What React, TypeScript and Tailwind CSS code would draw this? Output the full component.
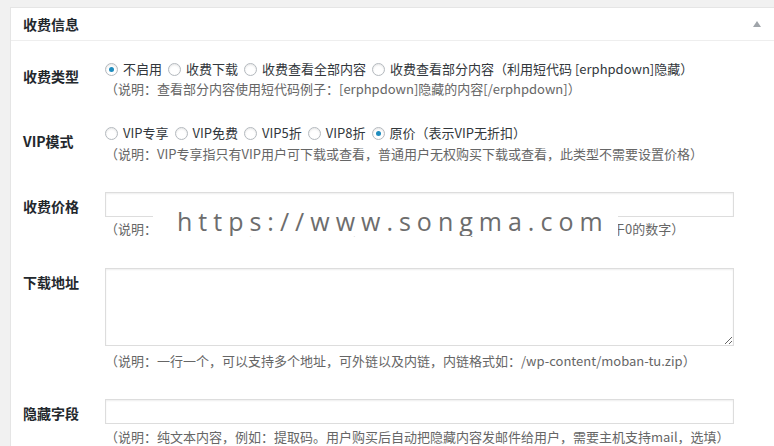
import React from "react";

const cjk = "font-['Microsoft_YaHei','Noto_Sans_CJK_SC',sans-serif]";

function Radio({ checked, label }: { checked?: boolean; label: string }) {
  return (
    <label className="flex items-center mr-[6px] whitespace-nowrap">
      <span className="w-[13px] h-[13px] mr-[5px] rounded-full border border-[#b4b9be] bg-white shadow-[inset_0_1px_2px_rgba(0,0,0,0.1)] flex items-center justify-center shrink-0">
        {checked && <span className="w-[5px] h-[5px] rounded-full bg-[#1e8cbe]" />}
      </span>
      <span>{label}</span>
    </label>
  );
}

function Row({
  label,
  labelPad,
  className,
  children,
}: {
  label: string;
  labelPad: string;
  className: string;
  children: React.ReactNode;
}) {
  return (
    <div className={`flex ${className}`}>
      <div className={`w-[82px] shrink-0 text-[14px] leading-[20px] font-bold text-[#23282d] ${labelPad}`}>{label}</div>
      <div className="flex-1 min-w-0">{children}</div>
    </div>
  );
}

function Desc({ children, className = "" }: { children: React.ReactNode; className?: string }) {
  return <p className={`text-[13px] leading-[20px] text-[#666] whitespace-nowrap ${className}`}>{children}</p>;
}

export default function App() {
  return (
    <div className={`h-[446px] overflow-hidden bg-[#f1f1f1] pt-[7px] pl-[10px] ${cjk}`}>
      <div className="w-[800px] bg-white border border-[#e5e5e5] h-[460px]">
        {/* Header */}
        <div className="h-[33px] border-b border-[#eee] flex items-center pl-[12px] pr-[48px] justify-between">
          <h2 className="text-[14px] font-bold text-[#23282d]">收费信息</h2>
          <span className="w-0 h-0 border-l-[4px] border-r-[4px] border-b-[6px] border-l-transparent border-r-transparent border-b-[#a0a5aa]" />
        </div>

        <div className="pl-[12px] text-[13px] text-[#32373c] w-[775px]">
          {/* 收费类型 */}
          <Row label="收费类型" labelPad="pt-[7px]" className="mt-[18px]">
            <div className="flex items-center h-[20px]">
              <Radio checked label="不启用" />
              <Radio label="收费下载" />
              <Radio label="收费查看全部内容" />
              <Radio label="收费查看部分内容（利用短代码 [erphpdown]隐藏）" />
            </div>
            <Desc>（说明：查看部分内容使用短代码例子：[erphpdown]隐藏的内容[/erphpdown]）</Desc>
          </Row>

          {/* VIP模式 */}
          <Row label="VIP模式" labelPad="pt-[8px]" className="mt-[24px]">
            <div className="flex items-center h-[20px]">
              <Radio label="VIP专享" />
              <Radio label="VIP免费" />
              <Radio label="VIP5折" />
              <Radio label="VIP8折" />
              <Radio checked label="原价（表示VIP无折扣）" />
            </div>
            <Desc className="mt-[1px]">
              （说明：VIP专享指只有VIP用户可下载或查看，普通用户无权购买下载或查看，此类型不需要设置价格）
            </Desc>
          </Row>

          {/* 收费价格 */}
          <Row label="收费价格" labelPad="pt-[4px]" className="mt-[28px]">
            <div className="relative">
              <input
                type="text"
                className="block w-[629px] h-[25px] border border-[#ddd] bg-white shadow-[inset_0_1px_2px_rgba(0,0,0,0.07)] outline-none"
              />
              <Desc className="mt-[2px]">
                （说明：请填写收费价格，单位为站内金币，留空则默认为免费；如需收费请填写一个大于0的数字）
              </Desc>
              {/* watermark */}
              <div className="absolute left-[48px] top-[13px] w-[465px] h-[31px] bg-white pt-[1px] pl-[24px] overflow-hidden">
                <span className="block font-['Open_Sans',sans-serif] text-[25px] leading-[30px] tracking-[6px] text-[#6d6d6d] whitespace-nowrap">
                  https://www.songma.com
                </span>
              </div>
            </div>
          </Row>

          {/* 下载地址 */}
          <Row label="下载地址" labelPad="pt-[4px]" className="mt-[29px]">
            <textarea className="block w-[629px] h-[78px] border border-[#ddd] bg-white shadow-[inset_0_1px_2px_rgba(0,0,0,0.07)] outline-none" />
            <Desc className="mt-[5px]">（说明：一行一个，可以支持多个地址，可外链以及内链，内链格式如：/wp-content/moban-tu.zip）</Desc>
          </Row>

          {/* 隐藏字段 */}
          <Row label="隐藏字段" labelPad="pt-[4px]" className="mt-[28px]">
            <input
              type="text"
              className="block w-[629px] h-[25px] border border-[#ddd] bg-white shadow-[inset_0_1px_2px_rgba(0,0,0,0.07)] outline-none"
            />
            <Desc className="mt-[3px]">
              （说明：纯文本内容，例如：提取码。用户购买后自动把隐藏内容发邮件给用户，需要主机支持mail，选填）
            </Desc>
          </Row>
        </div>
      </div>
    </div>
  );
}
